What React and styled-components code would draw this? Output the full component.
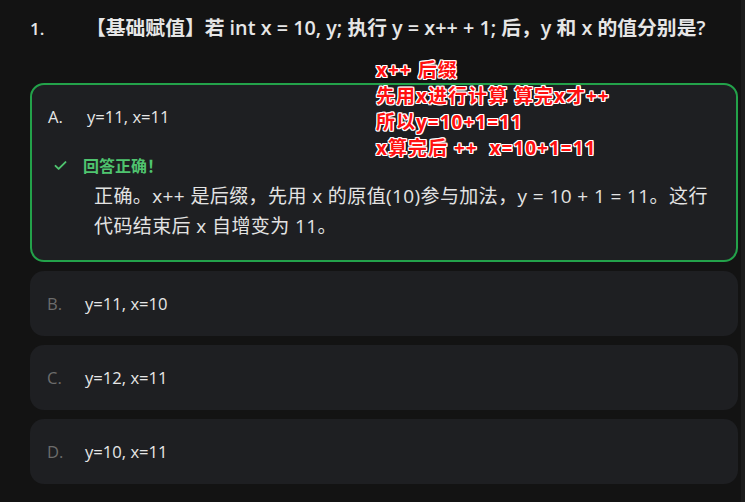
import styled, { createGlobalStyle } from "styled-components";

const GlobalStyle = createGlobalStyle`
  html, body {
    margin: 0;
    padding: 0;
    background: #131313;
  }
  body {
    font-family: "Open Sans", "Noto Sans CJK SC", sans-serif;
    color: #e3e3e3;
  }
`;

const Page = styled.div`
  position: relative;
  display: flex;
  width: 745px;
  height: 502px;
  overflow: hidden;
  background: #131313;
`;

const Main = styled.div`
  flex: 1;
  display: flex;
  flex-direction: column;
  padding: 16px 3px 0 30px;
`;

const ScrollTrack = styled.div`
  width: 4px;
  background: #1c1c1c;
`;

const Question = styled.div`
  display: flex;
  align-items: baseline;
  font-size: 19.8px;
  line-height: 24px;
  font-weight: 600;
  color: #e6e6e6;
  height: 67px;
  white-space: nowrap;
`;

const Number = styled.span`
  width: 56px;
  flex-shrink: 0;
  font-size: 17px;
`;

const Options = styled.div`
  display: flex;
  flex-direction: column;
  gap: 9px;
`;

const Card = styled.div`
  box-sizing: border-box;
  background: #1e1f22;
  border-radius: 14px;
  border: ${({ $correct }) => ($correct ? "2px solid #23a24a" : "none")};
  padding: ${({ $correct }) => ($correct ? "21px 16px 19px 16px" : "0 17px")};
  min-height: 65px;
  display: flex;
  flex-direction: column;
  justify-content: center;
`;

const OptionRow = styled.div`
  display: flex;
  align-items: center;
  font-size: 16.6px;
  line-height: 22px;
  color: #e6e6e6;
`;

const Letter = styled.span`
  width: ${({ $correct }) => ($correct ? "39px" : "38px")};
  color: ${({ $correct }) => ($correct ? "#e6e6e6" : "#6c6c6c")};
`;

const Feedback = styled.div`
  margin-top: 26px;
  display: flex;
  flex-direction: column;
`;

const FeedbackHead = styled.div`
  display: flex;
  align-items: center;
  gap: 15px;
  padding-left: 5px;
  height: 22px;
  color: #4fc46f;
  font-weight: 700;
  font-size: 16px;
`;

const Explanation = styled.p`
  margin: 5px 8px 0 46px;
  font-size: 19px;
  line-height: 30px;
  letter-spacing: 0.4px;
  color: #e3e3e3;
`;

const Annotation = styled.div`
  position: absolute;
  left: 376px;
  top: 57px;
  font-family: "Open Sans", "Noto Sans CJK SC", sans-serif;
  font-weight: 700;
  font-size: 19px;
  line-height: 26px;
  letter-spacing: 1px;
  color: #ff1010;
  text-shadow:
    1px 0 0 #fff, -1px 0 0 #fff, 0 1px 0 #fff, 0 -1px 0 #fff,
    1px 1px 0 #fff, -1px -1px 0 #fff, 1px -1px 0 #fff, -1px 1px 0 #fff;
  white-space: pre;
`;

const Check = () => (
  <svg width="15" height="15" viewBox="0 0 24 24" fill="none" stroke="#4fc46f" strokeWidth="3" strokeLinecap="round" strokeLinejoin="round">
    <path d="M4 12.5l5 5L20 6.5" />
  </svg>
);

const others = [
  ["B.", "y=11, x=10"],
  ["C.", "y=12, x=11"],
  ["D.", "y=10, x=11"],
];

export default function App() {
  return (
    <>
      <GlobalStyle />
      <Page>
        <Main>
          <Question>
            <Number>1.</Number>
            <span>【基础赋值】若 int x = 10, y; 执行 y = x++ + 1; 后，y 和 x 的值分别是?</span>
          </Question>
          <Options>
            <Card $correct>
              <OptionRow>
                <Letter $correct>A.</Letter>
                <span>y=11, x=11</span>
              </OptionRow>
              <Feedback>
                <FeedbackHead>
                  <Check />
                  <span>回答正确！</span>
                </FeedbackHead>
                <Explanation>
                  正确。x++ 是后缀，先用 x 的原值(10)参与加法，y = 10 + 1 = 11。这行代码结束后 x 自增变为 11。
                </Explanation>
              </Feedback>
            </Card>
            {others.map(([l, t]) => (
              <Card key={l}>
                <OptionRow>
                  <Letter>{l}</Letter>
                  <span>{t}</span>
                </OptionRow>
              </Card>
            ))}
          </Options>
        </Main>
        <ScrollTrack />
        <Annotation>
          {"x++ 后缀\n先用x进行计算 算完x才++\n所以y=10+1=11\nx算完后 ++  x=10+1=11"}
        </Annotation>
      </Page>
    </>
  );
}
